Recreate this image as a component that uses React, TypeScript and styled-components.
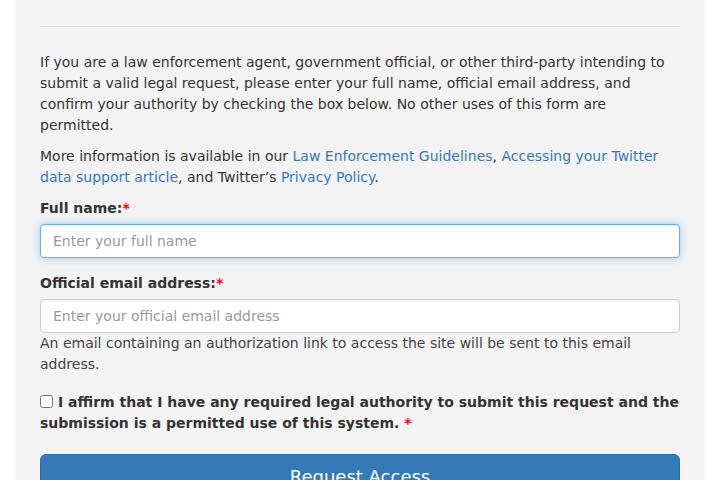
import React from "react";
import styled, { createGlobalStyle, css } from "styled-components";

const Global = createGlobalStyle`
  html, body { margin: 0; padding: 0; background: #fff; }
  body {
    font-family: "DejaVu Sans", "Liberation Sans", sans-serif;
    font-size: 14px;
    line-height: 21px;
    color: #333;
  }
  * { box-sizing: border-box; }
`;

const Page = styled.div`
  padding: 0 15px;
  height: 480px;
  overflow: hidden;
`;

const Panel = styled.div`
  background: #f3f3f3;
  padding: 26px 25px 40px;
`;

const Divider = styled.hr`
  margin: 0 0 25px;
  border: 0;
  border-top: 1px solid #e0e0e0;
`;

const Para = styled.p`
  margin: 0 0 10px;
`;

const Link = styled.a`
  color: #337ab7;
  text-decoration: none;
`;

const Group = styled.div<{ $gap?: number }>`
  margin-bottom: ${(p) => p.$gap ?? 15}px;
`;

const Label = styled.label`
  display: block;
  font-weight: bold;
  margin-bottom: 5px;
`;

const Req = styled.span`
  color: #f00;
`;

const Input = styled.input<{ $focused?: boolean }>`
  display: block;
  width: 100%;
  height: 34px;
  padding: 6px 12px;
  font-family: inherit;
  font-size: 14px;
  color: #555;
  background: #fff;
  border: 1px solid #ccc;
  border-radius: 4px;
  box-shadow: inset 0 1px 1px rgba(0, 0, 0, 0.075);
  outline: none;
  &::placeholder { color: #999; }
  ${(p) =>
    p.$focused &&
    css`
      border-color: #66afe9;
      box-shadow: inset 0 1px 1px rgba(0, 0, 0, 0.075), 0 0 8px rgba(102, 175, 233, 0.6);
    `}
`;

const Help = styled.div`
  color: #444;
`;

const CheckLabel = styled.label`
  display: block;
  font-weight: bold;
`;

const Check = styled.input`
  width: 13px;
  height: 13px;
  margin: 0 5px 0 0;
  vertical-align: -1px;
`;

const Button = styled.button`
  display: block;
  width: 100%;
  height: 46px;
  margin-top: 20px;
  padding: 10px 16px;
  font-family: inherit;
  font-size: 18px;
  line-height: 24px;
  color: #fff;
  background: #337ab7;
  border: 1px solid #2e6da4;
  border-radius: 6px;
`;

export default function App() {
  return (
    <>
      <Global />
      <Page>
        <Panel>
          <Divider />
          <Para>
            If you are a law enforcement agent, government official, or other third-party intending to
            submit a valid legal request, please enter your full name, official email address, and
            confirm your authority by checking the box below. No other uses of this form are permitted.
          </Para>
          <Para>
            More information is available in our <Link href="#">Law Enforcement Guidelines</Link>,{" "}
            <Link href="#">Accessing your Twitter data support article</Link>, and Twitter’s{" "}
            <Link href="#">Privacy Policy</Link>.
          </Para>
          <Group>
            <Label>
              Full name:<Req>*</Req>
            </Label>
            <Input $focused placeholder="Enter your full name" />
          </Group>
          <Group $gap={17}>
            <Label>
              Official email address:<Req>*</Req>
            </Label>
            <Input placeholder="Enter your official email address" />
            <Help>
              An email containing an authorization link to access the site will be sent to this email
              address.
            </Help>
          </Group>
          <CheckLabel>
            <Check type="checkbox" />
            I affirm that I have any required legal authority to submit this request and the submission
            is a permitted use of this system. <Req>*</Req>
          </CheckLabel>
          <Button>Request Access</Button>
        </Panel>
      </Page>
    </>
  );
}
